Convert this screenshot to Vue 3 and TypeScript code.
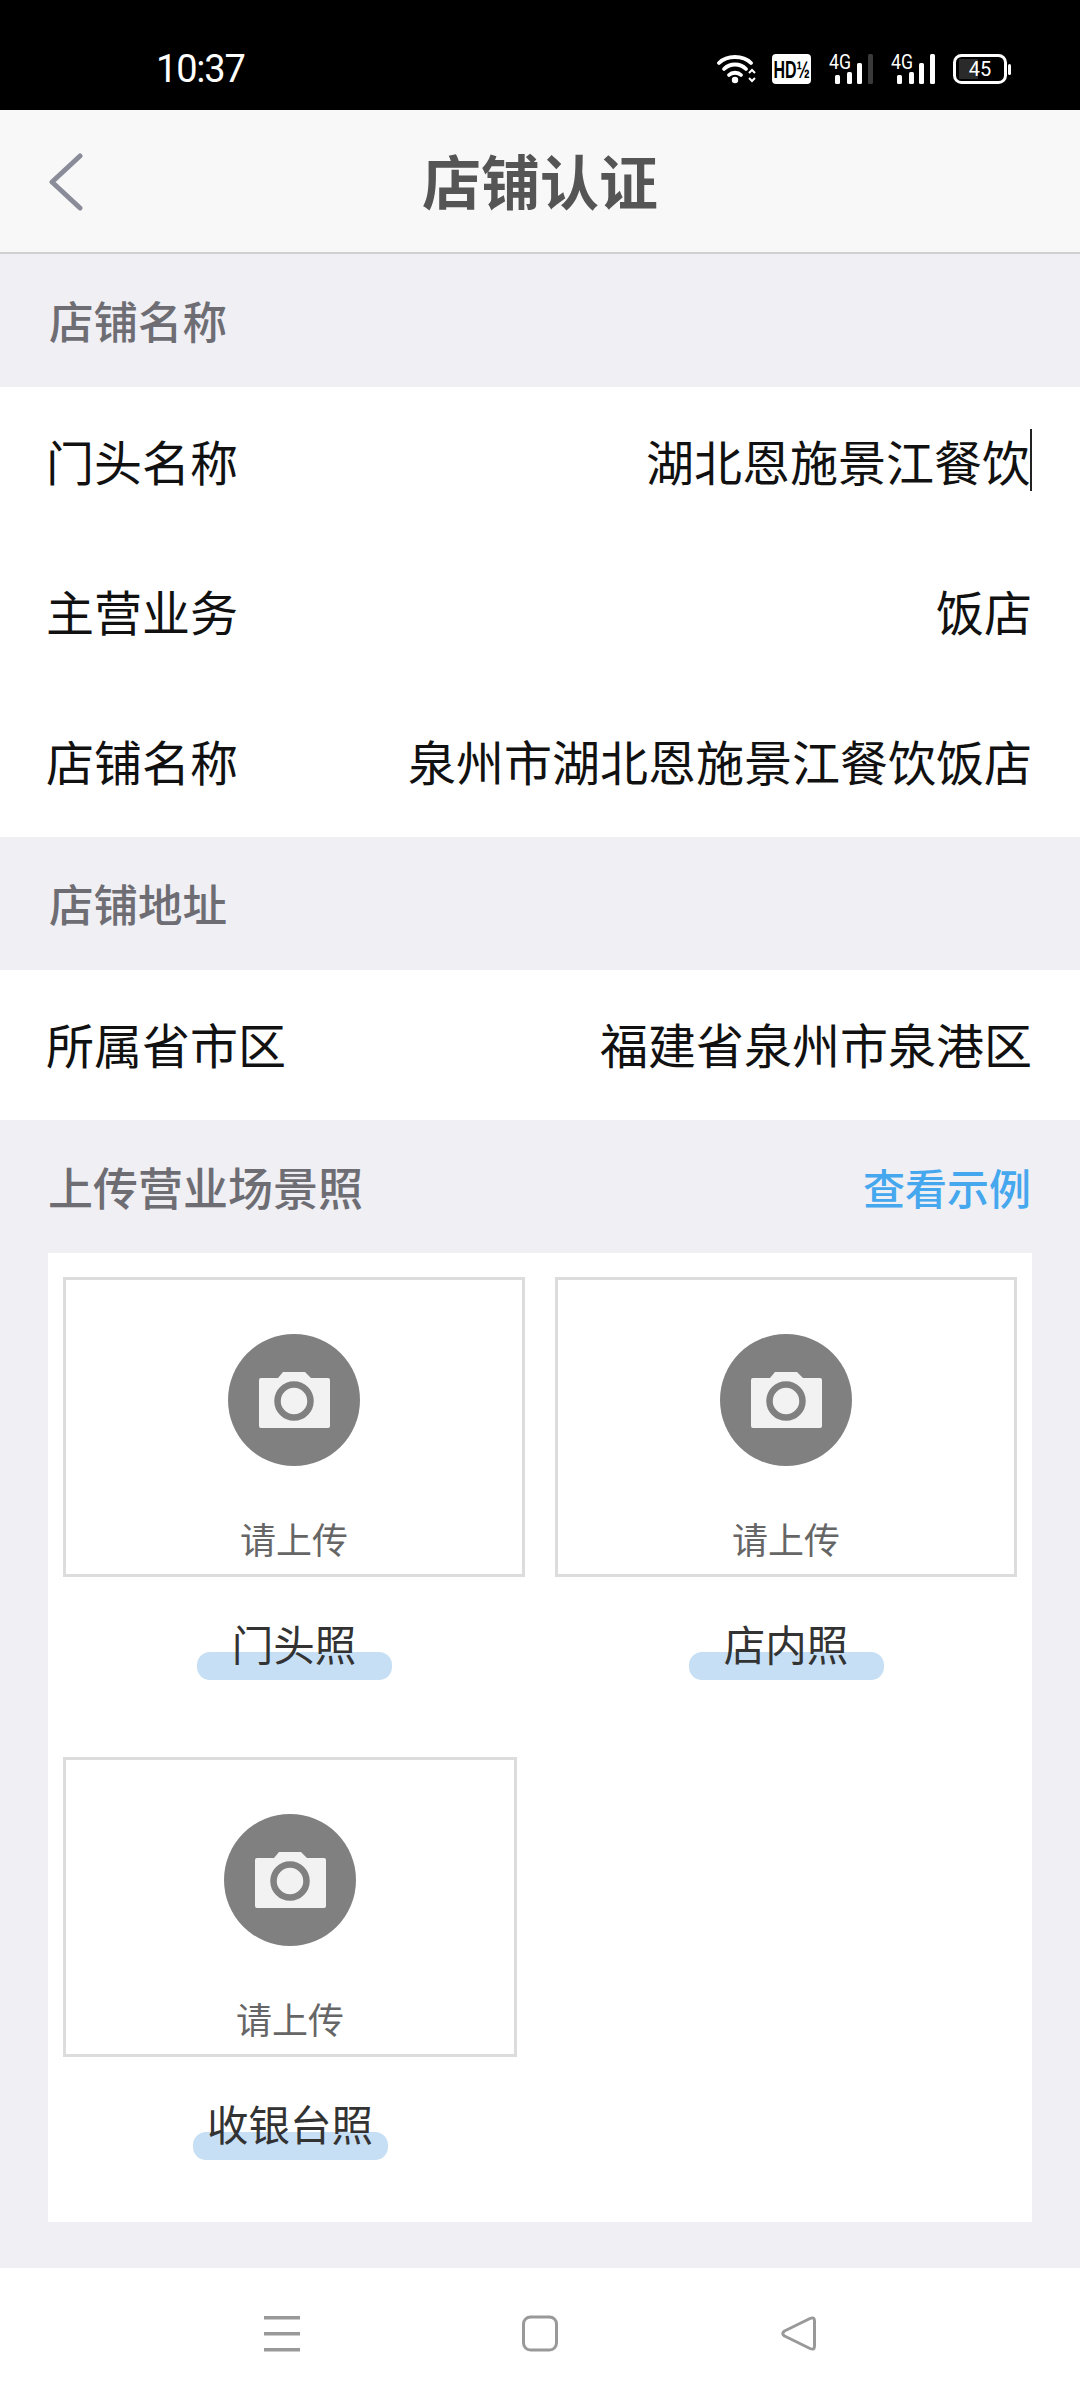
<script setup lang="ts">
const shopRows = [
  { label: '门头名称', value: '湖北恩施景江餐饮', cursor: true },
  { label: '主营业务', value: '饭店', cursor: false },
  { label: '店铺名称', value: '泉州市湖北恩施景江餐饮饭店', cursor: false },
]
const uploads = [
  { caption: '门头照', narrow: false },
  { caption: '店内照', narrow: false },
  { caption: '收银台照', narrow: true },
]
</script>

<template>
  <div class="page">
    <header class="status">
      <span class="time">10:37</span>
      <div class="status-icons">
        <svg class="s-wifi" width="39" height="30" viewBox="0 0 39 30">
          <g fill="none" stroke="#fff" stroke-width="3.8" stroke-linecap="round">
            <path d="M2 9 C10 1 26 1 34 9" />
            <path d="M7 15 C13 9 23 9 29 15" />
            <path d="M12 21 C15 18 21 18 24 21" />
          </g>
          <circle cx="18" cy="26" r="3.2" fill="#fff" />
          <path d="M32 19 l3 -3 l3 3 M32 24 l3 3 l3 -3" fill="none" stroke="#fff" stroke-width="2" />
        </svg>
        <svg class="s-hd" width="39" height="30" viewBox="0 0 39 30">
          <rect width="39" height="30" rx="4" fill="#fff" />
          <text transform="translate(1.5 24) scale(1 1.55)" class="hd">HD½</text>
        </svg>
        <svg class="s-sig" width="44" height="36" viewBox="0 -6 44 36">
          <text x="0" y="15" class="four-g" textLength="22" lengthAdjust="spacingAndGlyphs">4G</text>
          <rect x="6" y="21" width="5" height="9" rx="1.5" fill="#fff" />
          <rect x="18" y="18" width="5" height="12" rx="1.5" fill="#fff" />
          <rect x="28" y="9" width="5" height="21" rx="1.5" fill="#fff" />
          <rect x="39" y="0" width="5" height="30" rx="1.5" fill="#3a3a3a" />
        </svg>
        <svg class="s-sig" width="44" height="36" viewBox="0 -6 44 36">
          <text x="0" y="15" class="four-g" textLength="22" lengthAdjust="spacingAndGlyphs">4G</text>
          <rect x="6" y="21" width="5" height="9" rx="1.5" fill="#fff" />
          <rect x="18" y="18" width="5" height="12" rx="1.5" fill="#fff" />
          <rect x="28" y="9" width="5" height="21" rx="1.5" fill="#fff" />
          <rect x="39" y="0" width="5" height="30" rx="1.5" fill="#fff" />
        </svg>
        <svg class="s-bat" width="58" height="30" viewBox="0 0 58 30">
          <rect x="1.5" y="1.5" width="51" height="27" rx="7" fill="none" stroke="#fff" stroke-width="3" />
          <path d="M6 5 H25 V25 H6 Z" fill="#2a2a2a" />
          <rect x="55" y="10" width="3" height="11" rx="1.5" fill="#fff" />
          <text x="27" y="22" text-anchor="middle" class="bat-text">45</text>
        </svg>
      </div>
    </header>

    <nav class="topbar">
      <svg class="back" width="36" height="58" viewBox="0 0 36 58">
        <path d="M32 3 L4 29 L32 55" fill="none" stroke="#8a8d99" stroke-width="5" stroke-linecap="round" stroke-linejoin="round" />
      </svg>
      <h1 class="title">店铺认证</h1>
    </nav>

    <div class="section">店铺名称</div>
    <div class="rows">
      <div v-for="row in shopRows" :key="row.label" class="row">
        <span>{{ row.label }}</span>
        <span class="value" :class="{ 'has-cursor': row.cursor }">{{ row.value }}</span>
      </div>
    </div>

    <div class="section">店铺地址</div>
    <div class="rows">
      <div class="row">
        <span>所属省市区</span>
        <span class="value">福建省泉州市泉港区</span>
      </div>
    </div>

    <div class="section section-split">
      <span>上传营业场景照</span>
      <span class="example">查看示例</span>
    </div>

    <div class="upload-wrap">
      <div class="upload-card">
        <div v-for="u in uploads" :key="u.caption" class="item" :class="{ 'item-narrow': u.narrow }">
          <div class="tile">
            <svg class="cam" width="132" height="132" viewBox="0 0 132 132">
              <circle cx="66" cy="66" r="66" fill="#808080" />
              <path d="M31 46 a2 2 0 0 1 2 -2 H50 L55 38 H77 L83 44 H100 a2 2 0 0 1 2 2 V92 a2 2 0 0 1 -2 2 H33 a2 2 0 0 1 -2 -2 Z" fill="#f2f2f2" />
              <circle cx="66" cy="67" r="16.5" fill="none" stroke="#808080" stroke-width="6.5" />
            </svg>
            <span class="tile-text">请上传</span>
          </div>
          <div class="caption"><i class="bar"></i><span class="cap-text">{{ u.caption }}</span></div>
        </div>
      </div>
    </div>

    <footer class="softkeys">
      <svg width="36" height="38" viewBox="0 0 36 38">
        <rect x="0" y="1" width="36" height="3.5" fill="#999" />
        <rect x="0" y="17" width="36" height="3.5" fill="#999" />
        <rect x="0" y="33" width="36" height="3.5" fill="#999" />
      </svg>
      <svg width="36" height="38" viewBox="0 0 36 38">
        <rect x="1.5" y="2" width="33" height="33" rx="7" fill="none" stroke="#999" stroke-width="3" />
      </svg>
      <svg width="36" height="38" viewBox="0 0 36 38">
        <path d="M30 3.5 Q34.5 1.5 34.5 6 V31 Q34.5 35.5 30 33.5 L4.5 21 Q1 18.5 4.5 16 Z" fill="none" stroke="#999" stroke-width="3" stroke-linejoin="round" />
      </svg>
    </footer>
  </div>
</template>

<style scoped>
.page {
  width: 1080px;
  height: 2400px;
  display: flex;
  flex-direction: column;
  background: #efeff4;
  font-family: "Noto Sans CJK SC", "Noto Sans", sans-serif;
  overflow: hidden;
}
.status {
  height: 110px;
  flex: none;
  background: #000;
  color: #fff;
  display: flex;
  align-items: center;
  padding: 0 69px 0 156px;
  justify-content: space-between;
  box-sizing: border-box;
}
.time {
  font-family: Roboto, sans-serif;
  font-size: 38px;
  letter-spacing: -1.2px;
  font-weight: 400;
  padding-top: 28px;
}
.status-icons {
  display: flex;
  align-items: flex-end;
  height: 30px;
  margin-top: 28px;
}
.s-wifi { margin-right: -1px; }
.s-hd { margin-left: 17px; }
.s-sig { margin-left: 18px; }
.s-bat { margin-left: 18px; }
.hd { font: 700 16px "Liberation Sans", sans-serif; fill: #000; }
.four-g { font: 400 20px Roboto, sans-serif; fill: #fff; }
.bat-text { font: 400 20px Roboto, sans-serif; fill: #fff; }
.topbar {
  height: 144px;
  flex: none;
  background: #f8f8f8;
  border-bottom: 2px solid #cfcfcf;
  box-sizing: border-box;
  display: flex;
  align-items: center;
  justify-content: center;
  position: relative;
}
.back {
  position: absolute;
  left: 48px;
  top: 43px;
}
.title {
  margin: 0 0 4px;
  font-size: 59px;
  font-weight: 700;
  color: #555;
  line-height: 1;
}
.section {
  height: 133px;
  flex: none;
  box-sizing: border-box;
  padding: 0 49px 2px;
  display: flex;
  align-items: center;
  font-size: 44.5px;
  font-weight: 500;
  color: #6d6d73;
}
.section-split {
  justify-content: space-between;
  padding: 0 49px 0 48px;
  font-size: 45px;
}
.example {
  color: #45a7ee;
  font-size: 42px;
  font-weight: 500;
}
.rows {
  background: #fff;
  flex: none;
}
.row {
  height: 150px;
  box-sizing: border-box;
  padding: 0 48px 5px 46px;
  display: flex;
  align-items: center;
  justify-content: space-between;
  font-size: 48px;
  color: #111;
}
.has-cursor {
  border-right: 2px solid #222;
  height: 62px;
  line-height: 62px;
}
.upload-wrap {
  flex: 1;
  min-height: 0;
  padding: 0 48px 46px 48px;
  display: flex;
}
.upload-card {
  flex: 1;
  background: #fff;
  padding: 24px 15px 0 15px;
  display: flex;
  flex-wrap: wrap;
  column-gap: 30px;
  row-gap: 77px;
  align-content: flex-start;
}
.item { width: 462px; }
.item-narrow { width: 454px; }
.tile {
  height: 300px;
  box-sizing: border-box;
  border: 3px solid #dcdcdc;
  display: flex;
  flex-direction: column;
  align-items: center;
}
.cam {
  margin-top: 54px;
  flex: none;
}
.tile-text {
  margin-top: 45px;
  font-size: 36px;
  line-height: 54px;
  color: #666;
}
.caption {
  position: relative;
  height: 103px;
  display: flex;
  justify-content: center;
}
.bar {
  position: absolute;
  left: 50%;
  bottom: 0;
  width: 195px;
  height: 28px;
  margin-left: -97px;
  border-radius: 13px;
  background: #c6dff5;
}
.cap-text {
  position: relative;
  margin-top: 36px;
  font-size: 41.5px;
  line-height: 60px;
  color: #333;
}
.softkeys {
  height: 132px;
  flex: none;
  background: #fff;
  display: flex;
  justify-content: center;
  align-items: flex-start;
  padding-top: 47px;
  box-sizing: border-box;
  gap: 222px;
}
</style>

<style>
html, body { margin: 0; background: #efeff4; }
</style>
